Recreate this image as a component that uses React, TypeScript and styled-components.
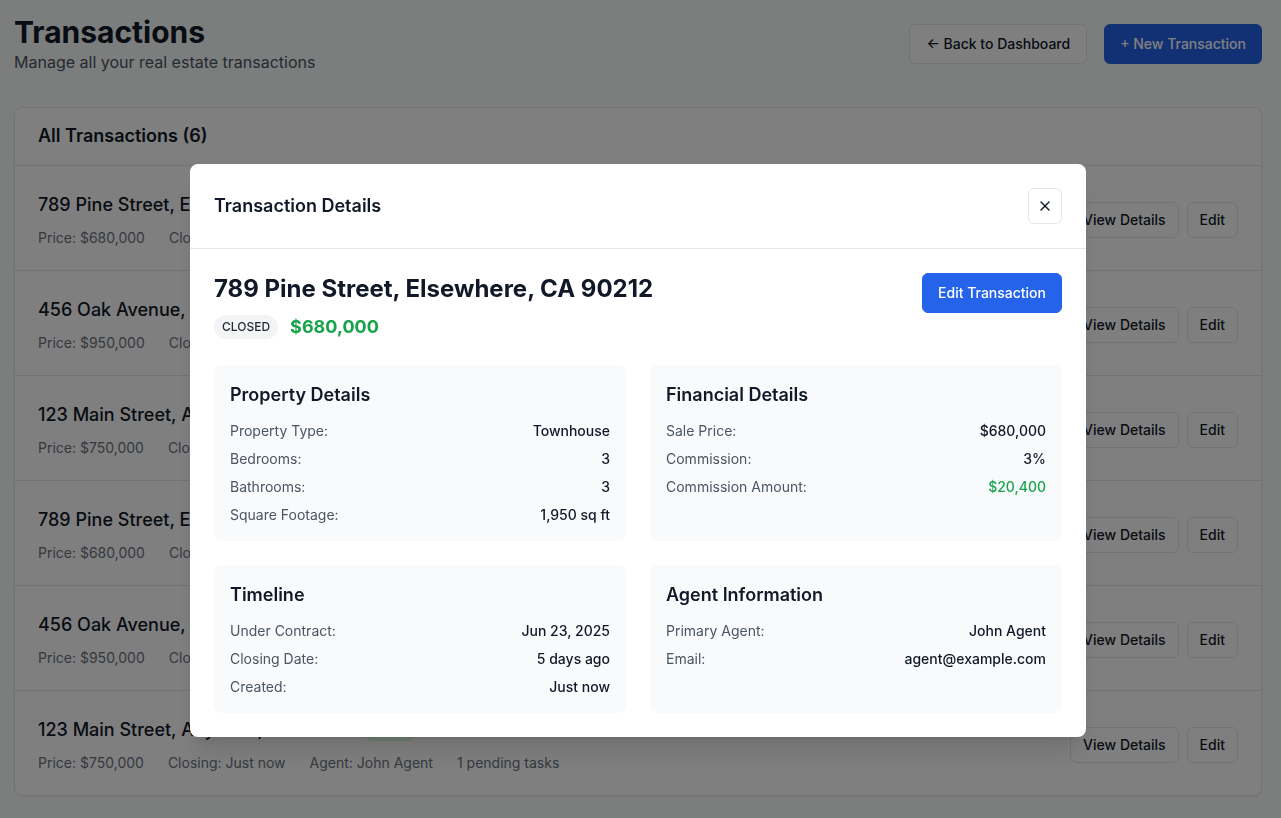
import React from "react";
import styled, { createGlobalStyle } from "styled-components";
import { X } from "lucide-react";

const GlobalStyle = createGlobalStyle`
  * { box-sizing: border-box; }
  html, body { margin: 0; padding: 0; }
  body {
    font-family: Inter, "Noto Sans", Arial, sans-serif;
    background: #f9fafb;
    color: #111827;
    -webkit-font-smoothing: antialiased;
  }
`;

const Page = styled.div`
  padding: 14px 19px 22px 14px;
  min-height: 818px;
`;

const Header = styled.header`
  display: flex;
  align-items: center;
  justify-content: space-between;
  margin-bottom: 33px;
`;

const TitleBlock = styled.div`
  display: flex;
  flex-direction: column;
`;

const PageTitle = styled.h1`
  margin: 0;
  font-size: 30px;
  line-height: 36px;
  font-weight: 700;
  color: #111827;
`;

const Subtitle = styled.p`
  margin: 0;
  font-size: 16px;
  line-height: 24px;
  color: #4b5563;
`;

const Actions = styled.div`
  display: flex;
  gap: 17px;
`;

const Button = styled.button<{ $variant?: "primary" | "outline"; $size?: "md" | "sm" }>`
  font-family: inherit;
  font-size: 14px;
  font-weight: 500;
  line-height: 20px;
  border-radius: 6px;
  cursor: pointer;
  padding: ${(p) => (p.$size === "sm" ? "7px 12px" : "9px 16px")};
  border: 1px solid ${(p) => (p.$variant === "primary" ? "#2563eb" : "#e5e7eb")};
  background: ${(p) => (p.$variant === "primary" ? "#2563eb" : "#ffffff")};
  color: ${(p) => (p.$variant === "primary" ? "#ffffff" : "#111827")};
`;

const PrimaryButton = styled(Button)`
  padding: 9px 15px;
`;

const Card = styled.section`
  background: #ffffff;
  border: 1px solid #e5e7eb;
  border-radius: 8px;
  box-shadow: 0 1px 2px rgba(0, 0, 0, 0.05);
`;

const CardHeader = styled.div`
  padding: 14px 23px 15px;
  border-bottom: 1px solid #e5e7eb;
`;

const CardTitle = styled.h2`
  margin: 0;
  font-size: 18px;
  line-height: 28px;
  font-weight: 600;
`;

const Row = styled.div`
  display: flex;
  align-items: center;
  justify-content: space-between;
  padding: 25px 23px 22px;
  border-bottom: 1px solid #e5e7eb;
  &:last-child { border-bottom: none; }
`;

const RowMain = styled.div`
  display: flex;
  flex-direction: column;
  gap: 9px;
`;

const AddressLine = styled.div`
  display: flex;
  align-items: center;
  gap: 12px;
`;

const Address = styled.span`
  font-size: 18px;
  line-height: 28px;
  font-weight: 500;
  color: #111827;
`;

const StatusBadge = styled.span<{ $tone: string }>`
  font-size: 12px;
  line-height: 16px;
  font-weight: 500;
  padding: 3px 8px;
  border-radius: 9999px;
  background: ${(p) => (p.$tone === "green" ? "#dcfce7" : p.$tone === "yellow" ? "#fef9c3" : "#dbeafe")};
  color: ${(p) => (p.$tone === "green" ? "#166534" : p.$tone === "yellow" ? "#854d0e" : "#1e40af")};
`;

const Meta = styled.div`
  display: flex;
  gap: 24px;
  font-size: 14px;
  line-height: 20px;
  color: #6b7280;
`;

const RowActions = styled.div`
  display: flex;
  gap: 8px;
`;

const Overlay = styled.div`
  position: fixed;
  inset: 0;
  background: rgba(0, 0, 0, 0.5);
  display: flex;
  align-items: flex-start;
  padding: 164px 0 0 190px;
`;

const Modal = styled.div`
  width: 896px;
  background: #ffffff;
  border-radius: 8px;
  box-shadow: 0 20px 25px -5px rgba(0, 0, 0, 0.1), 0 8px 10px -6px rgba(0, 0, 0, 0.1);
`;

const ModalHeader = styled.div`
  display: flex;
  align-items: center;
  justify-content: space-between;
  padding: 24px;
  border-bottom: 1px solid #e5e7eb;
`;

const ModalTitle = styled.h3`
  margin: 0;
  font-size: 18px;
  line-height: 28px;
  font-weight: 600;
`;

const CloseButton = styled.button`
  width: 34px;
  height: 36px;
  display: flex;
  align-items: center;
  justify-content: center;
  background: #ffffff;
  border: 1px solid #e5e7eb;
  border-radius: 6px;
  color: #111827;
  padding: 0;
  cursor: pointer;
`;

const ModalBody = styled.div`
  padding: 24px;
`;

const Summary = styled.div`
  display: flex;
  justify-content: space-between;
  align-items: flex-start;
  margin-bottom: 24px;
`;

const SummaryText = styled.div`
  display: flex;
  flex-direction: column;
  gap: 8px;
`;

const DetailAddress = styled.h2`
  margin: 0;
  font-size: 24px;
  line-height: 32px;
  font-weight: 700;
`;

const PriceLine = styled.div`
  display: flex;
  align-items: center;
  gap: 12px;
`;

const Pill = styled.span`
  font-size: 12px;
  line-height: 16px;
  font-weight: 500;
  padding: 4px 8px;
  border-radius: 9999px;
  background: #f3f4f6;
  color: #1f2937;
`;

const BigPrice = styled.span`
  font-size: 18px;
  line-height: 28px;
  font-weight: 700;
  color: #16a34a;
`;

const Grid = styled.div`
  display: grid;
  grid-template-columns: 1fr 1fr;
  gap: 24px;
`;

const InfoCard = styled.div`
  background: #f8fafc;
  border-radius: 8px;
  padding: 16px;
`;

const InfoTitle = styled.h4`
  margin: 0 0 12px;
  font-size: 18px;
  line-height: 28px;
  font-weight: 600;
`;

const InfoList = styled.div`
  display: flex;
  flex-direction: column;
  gap: 8px;
`;

const InfoRow = styled.div`
  display: flex;
  justify-content: space-between;
  font-size: 14px;
  line-height: 20px;
`;

const InfoLabel = styled.span`
  color: #4b5563;
`;

const InfoValue = styled.span<{ $green?: boolean }>`
  font-weight: 500;
  color: ${(p) => (p.$green ? "#16a34a" : "#111827")};
`;

const transactions = [
  { address: "789 Pine Street, Elsewhere, CA 90212", price: "$680,000", closing: "5 days ago", status: "closed", tone: "green", tasks: 0 },
  { address: "456 Oak Avenue, Somewhere, CA 90211", price: "$950,000", closing: "Jul 15, 2025", status: "pending", tone: "yellow", tasks: 2 },
  { address: "123 Main Street, Anytown, CA 90210", price: "$750,000", closing: "Jul 30, 2025", status: "active", tone: "blue", tasks: 3 },
  { address: "789 Pine Street, Elsewhere, CA 90212", price: "$680,000", closing: "5 days ago", status: "closed", tone: "green", tasks: 0 },
  { address: "456 Oak Avenue, Somewhere, CA 90211", price: "$950,000", closing: "Jul 15, 2025", status: "pending", tone: "yellow", tasks: 2 },
  { address: "123 Main Street, Anytown, CA 90210", price: "$750,000", closing: "Just now", status: "closed", tone: "green", tasks: 1 },
];

type Item = { label: string; value: string; green?: boolean };

const InfoBlock = ({ title, items }: { title: string; items: Item[] }) => (
  <InfoCard>
    <InfoTitle>{title}</InfoTitle>
    <InfoList>
      {items.map((it) => (
        <InfoRow key={it.label}>
          <InfoLabel>{it.label}</InfoLabel>
          <InfoValue $green={it.green}>{it.value}</InfoValue>
        </InfoRow>
      ))}
    </InfoList>
  </InfoCard>
);

export default function App() {
  return (
    <>
      <GlobalStyle />
      <Page>
        <Header>
          <TitleBlock>
            <PageTitle>Transactions</PageTitle>
            <Subtitle>Manage all your real estate transactions</Subtitle>
          </TitleBlock>
          <Actions>
            <Button $variant="outline">← Back to Dashboard</Button>
            <PrimaryButton $variant="primary">+ New Transaction</PrimaryButton>
          </Actions>
        </Header>
        <Card>
          <CardHeader>
            <CardTitle>All Transactions (6)</CardTitle>
          </CardHeader>
          {transactions.map((t, i) => (
            <Row key={i}>
              <RowMain>
                <AddressLine>
                  <Address>{t.address}</Address>
                  <StatusBadge $tone={t.tone}>{t.status}</StatusBadge>
                </AddressLine>
                <Meta>
                  <span>Price: {t.price}</span>
                  <span>Closing: {t.closing}</span>
                  <span>Agent: John Agent</span>
                  {t.tasks > 0 && <span>{t.tasks} pending tasks</span>}
                </Meta>
              </RowMain>
              <RowActions>
                <Button $variant="outline" $size="sm">View Details</Button>
                <Button $variant="outline" $size="sm">Edit</Button>
              </RowActions>
            </Row>
          ))}
        </Card>
      </Page>
      <Overlay>
        <Modal>
          <ModalHeader>
            <ModalTitle>Transaction Details</ModalTitle>
            <CloseButton aria-label="Close">
              <X size={16} strokeWidth={2} />
            </CloseButton>
          </ModalHeader>
          <ModalBody>
            <Summary>
              <SummaryText>
                <DetailAddress>789 Pine Street, Elsewhere, CA 90212</DetailAddress>
                <PriceLine>
                  <Pill>CLOSED</Pill>
                  <BigPrice>$680,000</BigPrice>
                </PriceLine>
              </SummaryText>
              <PrimaryButton $variant="primary">Edit Transaction</PrimaryButton>
            </Summary>
            <Grid>
              <InfoBlock
                title="Property Details"
                items={[
                  { label: "Property Type:", value: "Townhouse" },
                  { label: "Bedrooms:", value: "3" },
                  { label: "Bathrooms:", value: "3" },
                  { label: "Square Footage:", value: "1,950 sq ft" },
                ]}
              />
              <InfoBlock
                title="Financial Details"
                items={[
                  { label: "Sale Price:", value: "$680,000" },
                  { label: "Commission:", value: "3%" },
                  { label: "Commission Amount:", value: "$20,400", green: true },
                ]}
              />
              <InfoBlock
                title="Timeline"
                items={[
                  { label: "Under Contract:", value: "Jun 23, 2025" },
                  { label: "Closing Date:", value: "5 days ago" },
                  { label: "Created:", value: "Just now" },
                ]}
              />
              <InfoBlock
                title="Agent Information"
                items={[
                  { label: "Primary Agent:", value: "John Agent" },
                  { label: "Email:", value: "agent@example.com" },
                ]}
              />
            </Grid>
          </ModalBody>
        </Modal>
      </Overlay>
    </>
  );
}
